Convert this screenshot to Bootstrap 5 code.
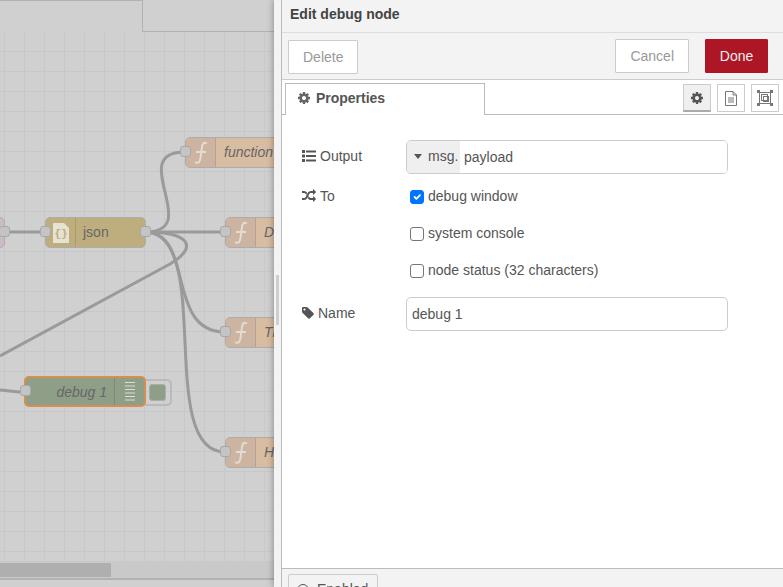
<!DOCTYPE html>
<html lang="en">
<head>
    <meta charset="UTF-8">
    <meta name="viewport" content="width=device-width, initial-scale=1.0">
    <title>Edit debug node</title>
    <link href="https://cdn.jsdelivr.net/npm/bootstrap@5.3.0/dist/css/bootstrap.min.css" rel="stylesheet">
    <style>
        html, body {
            height: 587px;
            overflow: hidden;
        }

        body {
            font-family: "Liberation Sans", Arial, sans-serif;
            font-size: 14px;
            color: #555;
            background: #d0d0d0;
        }

        /* workspace, dimmed by the open tray */
        .workspace {
            width: 274px;
            height: 587px;
            overflow: hidden;
        }

        .tab-strip {
            height: 32px;
        }

        .tab-active {
            width: 143px;
            border-top: 1px solid #b2b2b2;
            border-right: 1px solid #b2b2b2;
        }

        .tab-rest {
            border-bottom: 1px solid #b2b2b2;
        }

        .flow-canvas {
            height: 529px;
            overflow: hidden;
            background-color: #d0d0d0;
            background-image:
                linear-gradient(to right, #c8c8c8 1px, transparent 1px),
                linear-gradient(to bottom, #c8c8c8 1px, transparent 1px);
            background-size: 20px 20px;
            background-position: 4px 0, 0 19px;
        }

        .wires {
            left: 0;
            top: -32px;
            width: 274px;
            height: 587px;
        }

        .wires path {
            fill: none;
            stroke: #9a9a9a;
            stroke-width: 3;
        }

        .flow-node {
            height: 31px;
            border: 1px solid #adadad;
            border-radius: 5px;
            color: #666;
            line-height: 29px;
        }

        .flow-node .ico-cell {
            width: 30px;
            height: 100%;
            flex: none;
            border-right: 1px solid rgba(0, 0, 0, .1);
        }

        .node-fn {
            background: #d8bda3;
            width: 120px;
            font-style: italic;
        }

        .node-fn .ico-cell {
            background: #cdb4a0;
            border-radius: 4px 0 0 4px;
        }

        .node-fn .node-name {
            padding-left: 8px;
            white-space: nowrap;
        }

        .pos-function { left: 185px; top: 105px; }
        .pos-d { left: 225px; top: 185px; }
        .pos-t { left: 225px; top: 285px; }
        .pos-h { left: 225px; top: 405px; }

        .node-json {
            left: 45px;
            top: 185px;
            width: 101px;
            background: #beae7d;
        }

        .node-json .node-name {
            padding-left: 7px;
        }

        .node-purple {
            left: -40px;
            top: 185px;
            width: 45px;
            background: #c9bbc9;
        }

        .node-debug {
            left: 24px;
            top: 344px;
            width: 122px;
            height: 31px;
            background: #8f9e87;
            border: 2px solid #d58f50;
            font-style: italic;
            line-height: 29px;
        }

        .node-debug .node-name {
            width: 88px;
            text-align: right;
            padding-right: 7px;
        }

        .node-debug .ico-cell {
            border-right: 0;
            border-left: 1px solid rgba(0, 0, 0, .12);
        }

        .flow-port {
            width: 11px;
            height: 11px;
            top: 8px;
            background: #c4c4c4;
            border: 1px solid #a8a8a8;
            border-radius: 3px;
        }

        .node-debug .flow-port {
            top: 7px;
        }

        .port-in { left: -6px; }
        .port-out { right: -6px; }

        .status-btn {
            left: 145px;
            top: 347px;
            width: 27px;
            height: 27px;
            border: 2px solid #bababa;
            border-left: 0;
            border-radius: 0 5px 5px 0;
            padding-left: 4px;
        }

        .status-btn span {
            display: block;
            width: 17px;
            height: 17px;
            background: #8f9e87;
            border: 1px solid #adadad;
            border-radius: 3px;
        }

        .h-scroll {
            height: 17px;
            padding: 2px 0 1px;
            background: #c9c9c9;
        }

        .h-thumb {
            width: 111px;
            height: 100%;
            background: #afafaf;
        }

        .ws-foot {
            height: 9px;
            border-top: 2px solid #b2b2b2;
        }

        /* tray */
        .tray {
            width: 509px;
            height: 587px;
            background: #fff;
            box-shadow: -1px 0 6px rgba(0, 0, 0, .3);
        }

        .tray-grip {
            width: 8px;
            flex: none;
            background: #f3f3f3;
            border-right: 1px solid #bbb;
        }

        .grip-bar {
            left: 2px;
            top: 275px;
            width: 3px;
            height: 50px;
            background: #cfcfcf;
        }

        .tray-main {
            min-width: 0;
        }

        .tray-title {
            height: 33px;
            padding-left: 8px;
            background: #f3f3f3;
            border-bottom: 1px solid #ddd;
            font-weight: 700;
            color: #444;
            line-height: 29px;
        }

        .tray-actions {
            height: 47px;
            padding: 6px 15px 6px 6px;
            background: #f3f3f3;
            border-bottom: 1px solid #ccc;
        }

        .btn-ghost {
            height: 34px;
            padding: 0 14px;
            font-size: 14px;
            color: #999;
            background: #fff;
            border: 1px solid #ccc;
            border-radius: 1px;
        }

        .btn-delete {
            margin-top: 1px;
        }

        .btn-done {
            height: 34px;
            width: 63px;
            padding: 0;
            font-size: 14px;
            color: #eee;
            background: #ad1625;
            border: 1px solid #ad1625;
            border-radius: 1px;
        }

        .btn-done:hover {
            color: #fff;
            background: #ad1625;
        }

        .tray-tabs {
            height: 35px;
            padding: 3px 4px 0 3px;
            border-bottom: 1px solid #bbb;
        }

        .props-tab {
            width: 200px;
            height: 32px;
            padding: 0 11px;
            background: #fff;
            border: 1px solid #bbb;
            border-bottom: 0;
            font-weight: 700;
            color: #555;
            line-height: 29px;
        }

        .props-tab svg {
            margin-right: 1px;
            vertical-align: -2px;
        }

        .tool-group {
            gap: 6px;
        }

        .tool-btn {
            width: 28px;
            height: 28px;
            padding: 0;
            margin-top: 1px;
            background: #fff;
            border: 1px solid #ccc;
            border-radius: 0;
        }

        .tool-on {
            background: #efefef;
            border-bottom: 2px solid #aaa;
        }

        .tray-form {
            padding: 25px 55px 0 20px;
        }

        .form-line {
            min-height: 34px;
        }

        .check-line {
            height: 37px;
        }

        .lbl-cell {
            width: 104px;
            flex: none;
            color: #555;
        }

        .lbl-cell svg {
            margin-right: 4px;
            vertical-align: -2px;
        }

        .form-line .lbl-cell {
            padding-bottom: 2px;
        }

        .lbl-name svg {
            margin-left: -1px;
            margin-right: 3px;
        }

        .typed-box {
            height: 34px;
            border: 1px solid #ccc;
            border-radius: 5px;
            overflow: hidden;
        }

        .typed-pick {
            width: 53px;
            flex: none;
            padding-left: 6px;
            background: #efefef;
            color: #555;
            line-height: 30px;
        }

        .typed-caret {
            display: inline-block;
            width: 0;
            height: 0;
            margin: 0 6px 2px 1px;
            border: 4px solid transparent;
            border-top: 5px solid #555;
            border-bottom: 0;
        }

        .typed-val,
        .plain-val {
            height: 34px;
            padding: 0 5px;
            font-size: 14px;
            color: #555;
            border-radius: 5px;
        }

        .typed-val {
            height: 32px;
            padding: 0 4px;
            border: 0;
            border-radius: 0;
        }

        .plain-val {
            border-color: #ccc;
        }

        .check-line .form-check-input {
            width: 14px;
            height: 14px;
            margin: 0 4px 0 4px;
            border-color: #767676;
            border-radius: 3px;
        }

        .check-line .form-check-input:checked {
            background-color: #0075ff;
            border-color: #0075ff;
        }

        .check-line .form-check-label {
            color: #555;
        }

        .tray-foot {
            height: 19px;
            padding: 5px 0 0 6px;
            background: #f3f3f3;
            border-top: 1px solid #bbb;
            overflow: hidden;
        }

        .enabled-btn {
            width: 90px;
            height: 30px;
            padding: 0 0 0 8px;
            font-size: 14px;
            color: #555;
            text-align: left;
            background: #f3f3f3;
            border: 1px solid #ccc;
            border-radius: 2px;
        }

        .enabled-dot {
            display: inline-block;
            width: 12px;
            height: 12px;
            margin-right: 8px;
            border: 1px solid #555;
            border-radius: 50%;
            vertical-align: -2px;
        }
    </style>
</head>
<body>
    <div class="d-flex">
        <!-- Workspace -->
        <div class="workspace d-flex flex-column">
            <div class="tab-strip d-flex">
                <div class="tab-active"></div>
                <div class="tab-rest flex-grow-1"></div>
            </div>

            <div class="flow-canvas position-relative">
                <svg class="wires position-absolute" viewBox="0 0 274 587">
                    <path d="M5 232H45"/>
                    <path d="M145 232H225"/>
                    <path d="M145 232C205 232 125 152 185 152"/>
                    <path d="M145 232C195 232 165 332 225 332"/>
                    <path d="M145 232C215 232 155 452 225 452"/>
                    <path d="M145 232C188 232 200 246 170 264L0 356"/>
                    <path d="M0 390C10 391 15 392 25 392"/>
                </svg>

                <div class="flow-node node-purple position-absolute">
                    <span class="flow-port port-out position-absolute"></span>
                </div>

                <div class="flow-node node-json position-absolute d-flex">
                    <span class="flow-port port-in position-absolute"></span>
                    <div class="ico-cell d-flex align-items-center justify-content-center">
                        <svg width="16" height="20" viewBox="0 0 16 20">
                            <path d="M0 0H11L16 5V20H0Z" fill="#e6e2d4"/>
                            <text x="8" y="14" text-anchor="middle" font-size="11" font-weight="700" fill="#bfae7c" font-family="Liberation Mono, monospace">{}</text>
                        </svg>
                    </div>
                    <div class="node-name">json</div>
                    <span class="flow-port port-out position-absolute"></span>
                </div>

                <div class="flow-node node-fn pos-function position-absolute d-flex">
                    <span class="flow-port port-in position-absolute"></span>
                    <div class="ico-cell d-flex align-items-center justify-content-center">
                        <svg width="14" height="24" viewBox="0 0 14 24"><path d="M1 21C4 23 6 21 6.500 17L8 6C8.500 2 10 1 13 2.500M2 11H12" fill="none" stroke="#e2dcd4" stroke-width="2"/></svg>
                    </div>
                    <div class="node-name">function</div>
                </div>

                <div class="flow-node node-fn pos-d position-absolute d-flex">
                    <span class="flow-port port-in position-absolute"></span>
                    <div class="ico-cell d-flex align-items-center justify-content-center">
                        <svg width="14" height="24" viewBox="0 0 14 24"><path d="M1 21C4 23 6 21 6.500 17L8 6C8.500 2 10 1 13 2.500M2 11H12" fill="none" stroke="#e2dcd4" stroke-width="2"/></svg>
                    </div>
                    <div class="node-name">Debug</div>
                </div>

                <div class="flow-node node-fn pos-t position-absolute d-flex">
                    <span class="flow-port port-in position-absolute"></span>
                    <div class="ico-cell d-flex align-items-center justify-content-center">
                        <svg width="14" height="24" viewBox="0 0 14 24"><path d="M1 21C4 23 6 21 6.500 17L8 6C8.500 2 10 1 13 2.500M2 11H12" fill="none" stroke="#e2dcd4" stroke-width="2"/></svg>
                    </div>
                    <div class="node-name">Time</div>
                </div>

                <div class="flow-node node-fn pos-h position-absolute d-flex">
                    <span class="flow-port port-in position-absolute"></span>
                    <div class="ico-cell d-flex align-items-center justify-content-center">
                        <svg width="14" height="24" viewBox="0 0 14 24"><path d="M1 21C4 23 6 21 6.500 17L8 6C8.500 2 10 1 13 2.500M2 11H12" fill="none" stroke="#e2dcd4" stroke-width="2"/></svg>
                    </div>
                    <div class="node-name">Humidity</div>
                </div>

                <div class="status-btn position-absolute d-flex align-items-center"><span></span></div>

                <div class="flow-node node-debug position-absolute d-flex">
                    <span class="flow-port port-in position-absolute"></span>
                    <div class="node-name">debug 1</div>
                    <div class="ico-cell d-flex align-items-center justify-content-center">
                        <svg width="10" height="19" viewBox="0 0 10 19" fill="#dcdcd8">
                            <rect y="0" width="10" height="1"/><rect y="3.500" width="10" height="1"/><rect y="7" width="10" height="1"/><rect y="10.500" width="10" height="1"/><rect y="14" width="10" height="1"/><rect y="17.500" width="10" height="1"/>
                        </svg>
                    </div>
                </div>
            </div>

            <div class="h-scroll"><div class="h-thumb"></div></div>
            <div class="ws-foot"></div>
        </div>

        <!-- Edit tray -->
        <div class="tray d-flex position-relative">
            <div class="tray-grip position-relative"><div class="grip-bar position-absolute"></div></div>
            <div class="tray-main flex-grow-1 d-flex flex-column">
                <div class="tray-title">Edit debug node</div>

                <div class="tray-actions d-flex">
                    <button type="button" class="btn btn-ghost btn-delete">Delete</button>
                    <button type="button" class="btn btn-ghost ms-auto">Cancel</button>
                    <button type="button" class="btn btn-done ms-3">Done</button>
                </div>

                <div class="tray-tabs d-flex">
                    <div class="props-tab">
                        <svg width="14" height="14" viewBox="0 0 1792 1792"><path fill="#666" fill-rule="evenodd" d="M1152 896q0-106-75-181t-181-75-181 75-75 181 75 181 181 75 181-75 75-181zm512-109v222q0 12-8 23t-20 13l-185 28q-19 54-39 91 35 50 107 138 10 12 10 25t-9 23q-27 37-99 108t-94 71q-12 0-26-9l-138-108q-44 23-91 38-16 136-29 186-7 28-36 28h-222q-14 0-24.500-8.500t-11.500-21.500l-28-184q-49-16-90-37l-141 107q-10 9-25 9-14 0-25-11-126-114-165-168-7-10-7-23 0-12 8-23 15-21 51-66.500t54-70.500q-27-50-41-99l-183-27q-13-2-21-12.500t-8-23.500v-222q0-12 8-23t19-13l186-28q14-46 39-92-40-57-107-138-10-12-10-24 0-10 9-23 26-36 98.500-107.500t94.500-71.500q13 0 26 10l138 107q44-23 91-38 16-136 29-186 7-28 36-28h222q14 0 24.500 8.500t11.500 21.500l28 184q49 16 90 37l142-107q9-9 24-9 13 0 25 10 129 119 165 170 7 8 7 22 0 12-8 23-15 21-51 66.500t-54 70.500q26 50 41 98l183 28q13 2 21 12.500t8 23.500z"/></svg>
                        Properties
                    </div>
                    <div class="ms-auto d-flex tool-group">
                        <button type="button" class="btn tool-btn tool-on d-flex align-items-center justify-content-center">
                            <svg width="14" height="14" viewBox="0 0 1792 1792"><path fill="#555" fill-rule="evenodd" d="M1152 896q0-106-75-181t-181-75-181 75-75 181 75 181 181 75 181-75 75-181zm512-109v222q0 12-8 23t-20 13l-185 28q-19 54-39 91 35 50 107 138 10 12 10 25t-9 23q-27 37-99 108t-94 71q-12 0-26-9l-138-108q-44 23-91 38-16 136-29 186-7 28-36 28h-222q-14 0-24.500-8.500t-11.500-21.500l-28-184q-49-16-90-37l-141 107q-10 9-25 9-14 0-25-11-126-114-165-168-7-10-7-23 0-12 8-23 15-21 51-66.500t54-70.500q-27-50-41-99l-183-27q-13-2-21-12.500t-8-23.500v-222q0-12 8-23t19-13l186-28q14-46 39-92-40-57-107-138-10-12-10-24 0-10 9-23 26-36 98.500-107.500t94.500-71.500q13 0 26 10l138 107q44-23 91-38 16-136 29-186 7-28 36-28h222q14 0 24.500 8.500t11.500 21.500l28 184q49 16 90 37l142-107q9-9 24-9 13 0 25 10 129 119 165 170 7 8 7 22 0 12-8 23-15 21-51 66.500t-54 70.500q26 50 41 98l183 28q13 2 21 12.500t8 23.500z"/></svg>
                        </button>
                        <button type="button" class="btn tool-btn d-flex align-items-center justify-content-center">
                            <svg width="12" height="15" viewBox="0 0 12 15" fill="none" stroke="#777"><path d="M.5.5H8L11.500 4V14.500H.5Z"/><path d="M8 .5V4H11.500M3 7H9M3 9H9M3 11H9"/></svg>
                        </button>
                        <button type="button" class="btn tool-btn d-flex align-items-center justify-content-center">
                            <svg width="16" height="16" viewBox="0 0 16 16" fill="none" stroke="#777"><rect x="2.500" y="2.500" width="11" height="11"/><rect x="4.500" y="4.500" width="6" height="6"/><rect x="6.500" y="6.500" width="5" height="5"/><g fill="#777" stroke="none"><rect width="3" height="3"/><rect x="13" width="3" height="3"/><rect y="13" width="3" height="3"/><rect x="13" y="13" width="3" height="3"/></g></svg>
                        </button>
                    </div>
                </div>

                <div class="tray-form flex-grow-1">
                    <div class="form-line d-flex align-items-center mb-1">
                        <div class="lbl-cell">
                            <svg width="14" height="14" viewBox="0 0 14 14" fill="#555"><path d="M0 1h3v3H0zM0 5.500h3v3H0zM0 10h3v3H0zM4 1.500H14v2H4zM4 6H14v2H4zM4 10.500H14v2H4z"/></svg>Output
                        </div>
                        <div class="typed-box d-flex flex-grow-1">
                            <div class="typed-pick"><span class="typed-caret"></span>msg.</div>
                            <input type="text" class="form-control typed-val shadow-none" value="payload">
                        </div>
                    </div>

                    <div class="check-line d-flex align-items-center">
                        <div class="lbl-cell">
                            <svg width="14" height="14" viewBox="0 0 1792 1792" fill="#555"><path d="M666 481q-60 92-137 273-22-45-37-72.500t-40.500-63.500-51-56.500-63-35-81.500-14.500h-224q-14 0-23-9t-9-23v-192q0-14 9-23t23-9h224q250 0 410 225zm1126 799q0 14-9 23l-320 320q-9 9-23 9-13 0-22.500-9.500t-9.500-22.500v-192q-32 0-85 .5t-81 1-73-1-71-5-64-10.500-63-18.500-58-28.500-59-40-55-53.500-56-69.500q59-93 136-273 22 45 37 72.500t40.500 63.500 51 56.500 63 35 81.500 14.500h256v-192q0-14 9-23t23-9q12 0 24 10l319 319q9 9 9 23zm0-896q0 14-9 23l-320 320q-9 9-23 9-13 0-22.500-9.500t-9.500-22.500v-192h-256q-48 0-87 15t-69 45-51 61.500-45 77.500q-32 62-78 171-29 66-49.500 111t-54 105-64 100-74 83-90 68.500-106.500 42-128 16.500h-224q-14 0-23-9t-9-23v-192q0-14 9-23t23-9h224q48 0 87-15t69-45 51-61.500 45-77.500q32-62 78-171 29-66 49.500-111t54-105 64-100 74-83 90-68.500 106.500-42 128-16.500h256v-192q0-14 9-23t23-9q12 0 24 10l319 319q9 9 9 23z"/></svg>To
                        </div>
                        <input class="form-check-input" type="checkbox" id="chkWindow" checked>
                        <label class="form-check-label" for="chkWindow">debug window</label>
                    </div>
                    <div class="check-line d-flex align-items-center">
                        <div class="lbl-cell"></div>
                        <input class="form-check-input" type="checkbox" id="chkConsole">
                        <label class="form-check-label" for="chkConsole">system console</label>
                    </div>
                    <div class="check-line d-flex align-items-center">
                        <div class="lbl-cell"></div>
                        <input class="form-check-input" type="checkbox" id="chkStatus">
                        <label class="form-check-label" for="chkStatus">node status (32 characters)</label>
                    </div>

                    <div class="form-line d-flex align-items-center mt-2">
                        <div class="lbl-cell lbl-name">
                            <svg width="14" height="14" viewBox="0 0 1792 1792" fill="#555"><path d="M576 448q0-53-37.500-90.500t-90.500-37.500-90.500 37.500-37.500 90.500 37.500 90.500 90.500 37.500 90.500-37.500 37.500-90.500zm1067 576q0 53-37 90l-491 492q-39 37-91 37-53 0-90-37l-715-716q-38-37-64.500-101t-26.500-117v-416q0-52 38-90t90-38h416q53 0 117 26.500t102 64.500l715 714q37 39 37 91z"/></svg>Name
                        </div>
                        <input type="text" class="form-control plain-val flex-grow-1 w-auto shadow-none" value="debug 1">
                    </div>
                </div>

                <div class="tray-foot">
                    <button type="button" class="btn enabled-btn"><span class="enabled-dot"></span>Enabled</button>
                </div>
            </div>
        </div>
    </div>

    <script src="https://cdn.jsdelivr.net/npm/bootstrap@5.3.0/dist/js/bootstrap.bundle.min.js"></script>
</body>
</html>
